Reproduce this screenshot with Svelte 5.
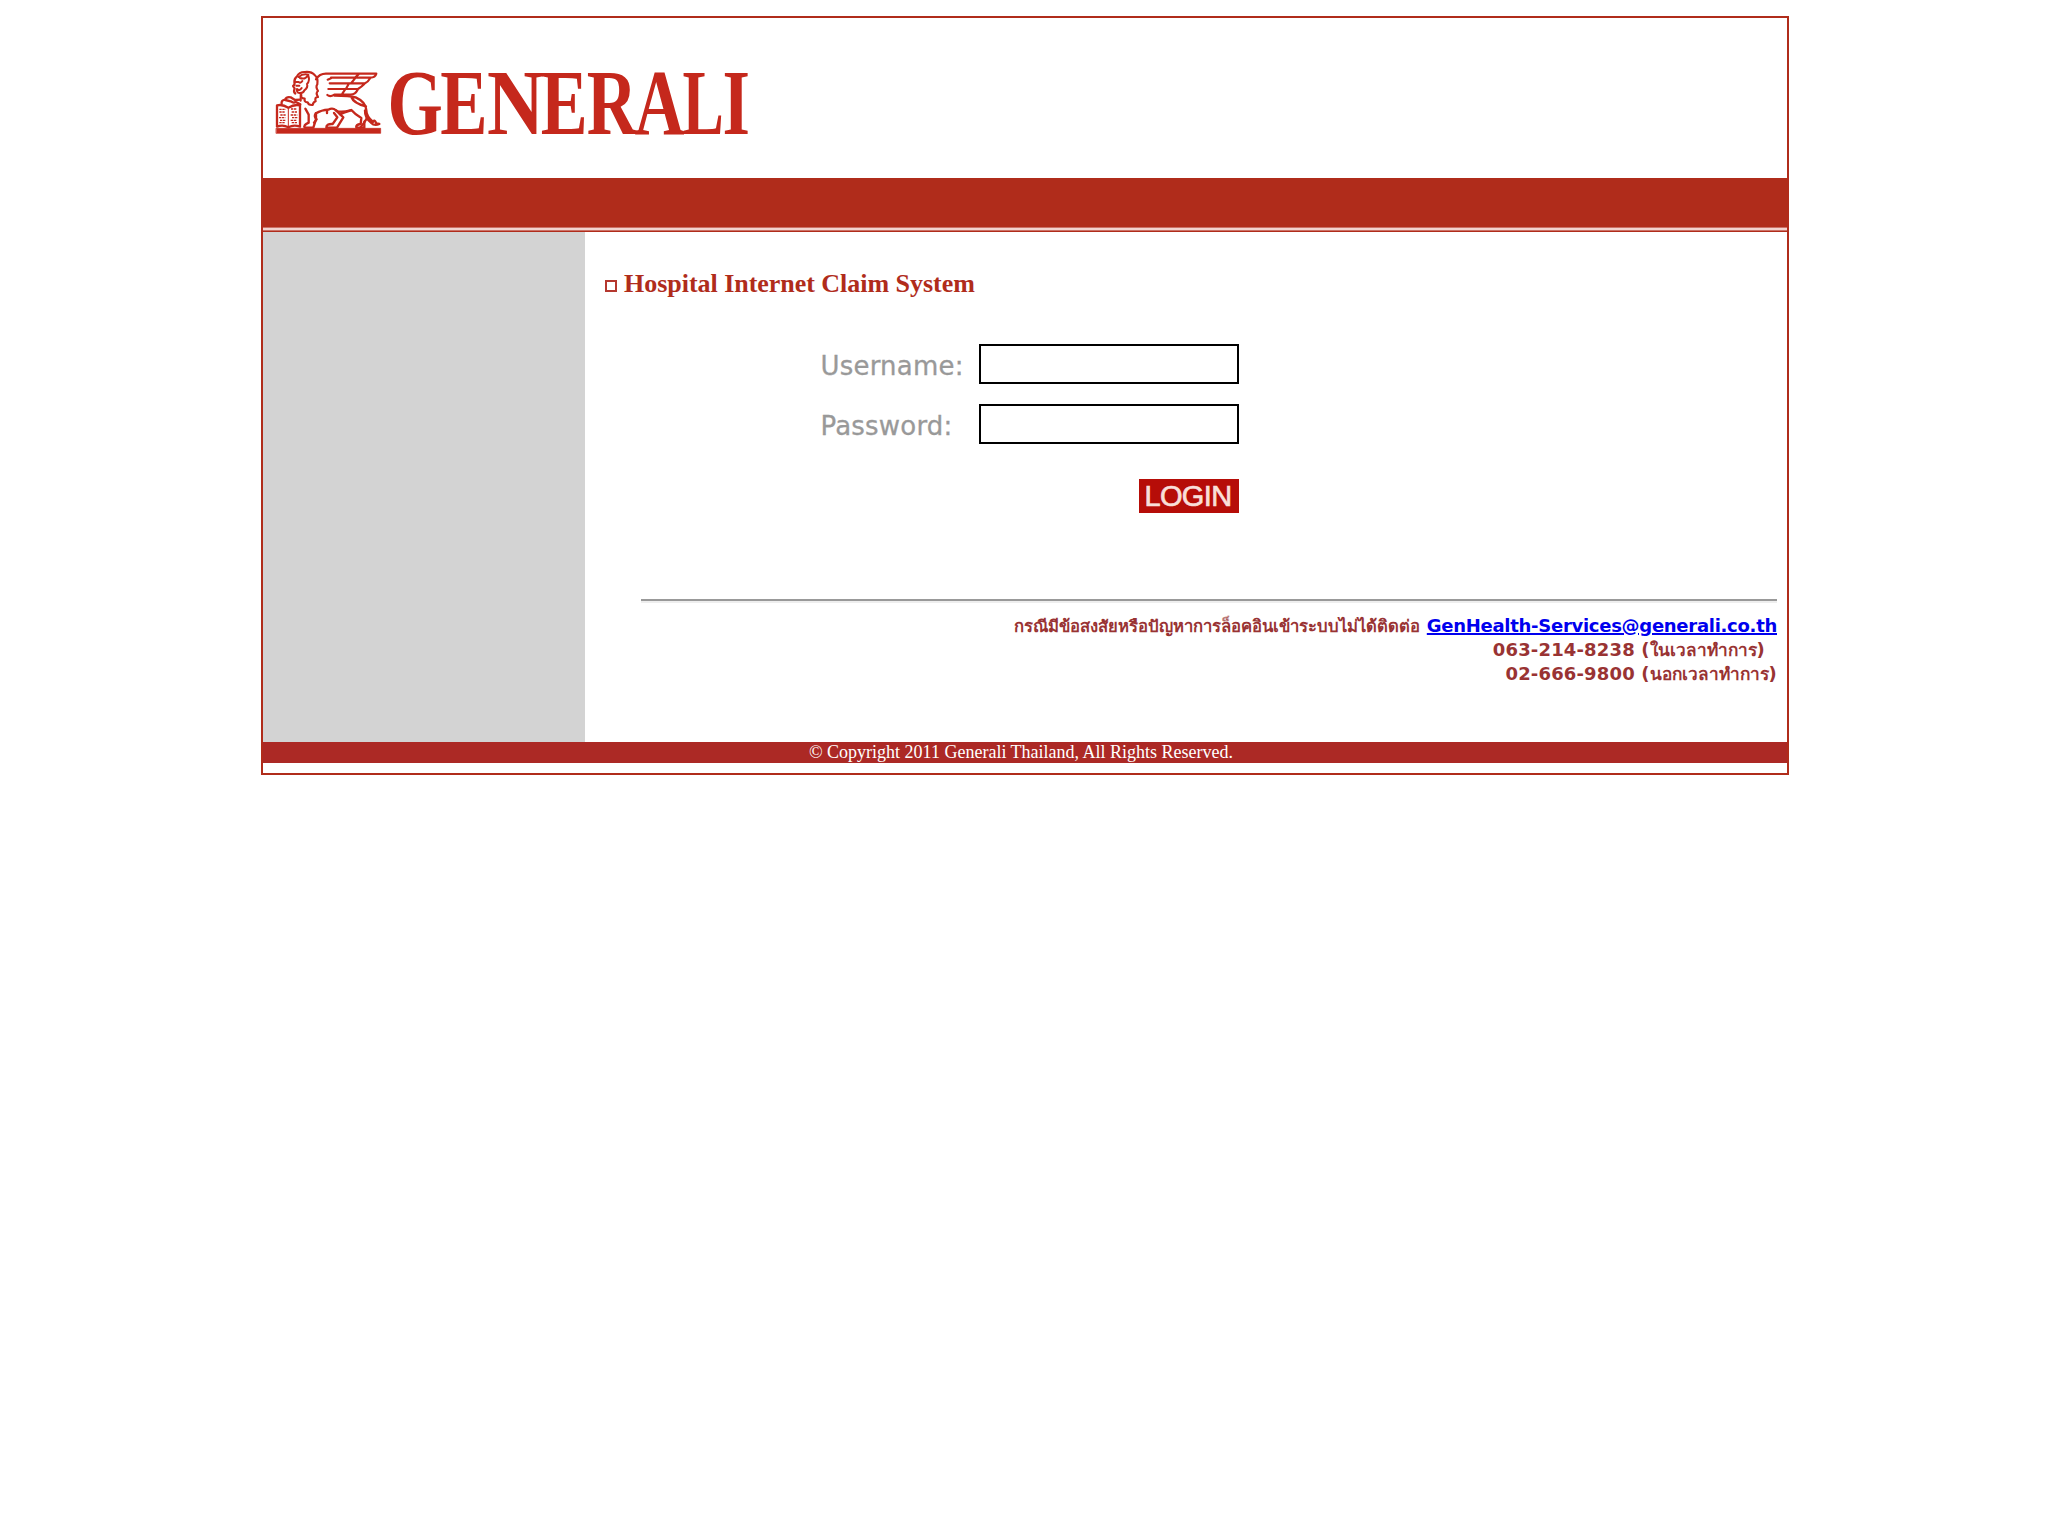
<script>
  let username = $state('');
  let password = $state('');

  // Wordmark letters: left edge and horizontal scale of each condensed capital
  const letters = [
    { ch: 'G', x: 124.6, sx: 0.764 },
    { ch: 'E', x: 177.2, sx: 0.762 },
    { ch: 'N', x: 223.9, sx: 0.85 },
    { ch: 'E', x: 277.8, sx: 0.755 },
    { ch: 'R', x: 323.8, sx: 0.75 },
    { ch: 'A', x: 371.4, sx: 0.745 },
    { ch: 'L', x: 419.6, sx: 0.665 },
    { ch: 'I', x: 459.6, sx: 0.76 }
  ];
</script>

<div class="page">
  <header>
    <svg class="logo" viewBox="0 0 500 160" width="500" height="160" role="img" aria-label="Generali">
      <g transform="translate(2 42) scale(0.33333)" fill="none" stroke="#c5281c" stroke-width="7" stroke-linejoin="round" stroke-linecap="round">
        <path d="M34 205H347V220H34Z" fill="#c5281c" stroke-width="2" />
        <path d="M36 136Q53 132 70 143Q88 132 105 136V200Q86 193 70 202Q54 193 36 200Z" />
        <path d="M70 144V198" stroke-width="3" />
        <path d="M43 148H62M43 156H60M46 165H63M42 173H61M45 181H63M43 188H60M78 147H96M80 156H98M77 165H97M81 173H98M77 181H96M80 188H98" stroke-width="4" stroke-dasharray="7 2" stroke-linecap="butt" />
        <path d="M50 131Q48 121 60 119Q65 109 77 112L90 120L106 119M61 120L77 124Q88 131 91 125L106 133" />
        <path d="M91 101Q84 95 89 86L84 78Q91 74 88 67Q87 56 96 49Q103 35 120 36Q139 34 149 45Q160 54 157 73Q151 80 159 93Q151 99 159 111Q148 111 152 124Q145 126 143 135Q130 136 128 127Q117 127 119 116Q106 115 109 105" stroke-width="6.5" />
        <path d="M101 51Q113 40 130 44Q121 60 105 54M129 44Q136 63 126 72Q130 82 118 91Q115 100 103 99Q94 98 96 87Q104 94 110 84M92 66H101Q107 71 112 63M94 77H103M107 103V122" stroke-width="6" />
        <path d="M153 58Q163 41 183 41H334Q331 52 316 53H198M282 42L270 53M198 55L188 59M316 54Q309 66 300 70H194M270 55L259 69M298 72Q290 80 279 87H190M251 72L243 86M278 89Q271 103 257 104H208Q195 112 187 105M240 89L232 101" stroke-width="6.5" />
        <path d="M209 107Q254 107 272 112Q303 126 304 151Q304 169 324 186Q327 176 334 190L343 192Q328 199 318 188Q299 173 300 151M259 111Q266 130 303 139M303 157Q309 176 298 185V203H274Q271 194 287 192L289 174Q270 163 259 150Q225 160 213 151Q203 142 190 149Q169 150 153 160V178L145 203H120Q113 196 131 188V164L121 146" />
        <path d="M152 160Q146 170 155 178L147 188M186 151V159M213 151L235 172L216 203H184Q183 191 203 192L217 172L207 159M258 151Q237 157 224 163M299 186L286 203" />
      </g>
      <g fill="#c5281c" font-family="'Liberation Serif', serif" font-weight="700" font-size="93">
        {#each letters as l}
          <text transform="translate({l.x} 115.5) scale({l.sx} 1)">{l.ch}</text>
        {/each}
      </g>
    </svg>
  </header>
  <div class="band"></div>
  <div class="stripe"></div>

  <div class="body">
    <aside></aside>
    <main>
      <h1><span class="bullet"></span>Hospital Internet Claim System</h1>
      <form onsubmit={(e) => e.preventDefault()}>
        <label for="user">Username:</label>
        <input id="user" type="text" bind:value={username} />
        <label for="pass">Password:</label>
        <input id="pass" type="password" bind:value={password} />
        <button type="submit">LOGIN</button>
      </form>
      <div class="contact">
        <div class="rule"></div>
        <p><span class="thai">กรณีมีข้อสงสัยหรือปัญหาการล็อคอินเข้าระบบไม่ได้ติดต่อ</span> <a href="mailto:GenHealth-Services@generali.co.th">GenHealth-Services@generali.co.th</a></p>
        <p class="office">063-214-8238 (<span class="thai hours">ในเวลาทำการ</span>)</p>
        <p>02-666-9800 (<span class="thai hours">นอกเวลาทำการ</span>)</p>
      </div>
    </main>
  </div>

  <footer>© Copyright 2011 Generali Thailand, All Rights Reserved.</footer>
</div>

<style>
  :global(body) {
    margin: 0;
    background: #fff;
  }
  .page {
    box-sizing: border-box;
    width: 1528px;
    height: 759px;
    margin: 16px auto 0;
    border: 2px solid #b02c1b;
    font-family: 'Liberation Serif', serif;
  }
  header {
    height: 160px;
  }
  .logo {
    display: block;
  }
  .band {
    height: 49px;
    background: #b02c1b;
  }
  .stripe {
    height: 5px;
    background: linear-gradient(#cc7166 0 1px, #f2d3cf 1px 3px, #cc7166 3px 4px, #b02c1b 4px);
  }
  .body {
    display: flex;
    height: 510px;
  }
  aside {
    width: 322px;
    background: #d3d3d3;
  }
  main {
    flex: 1;
    padding: 37px 10px 0 20px;
  }
  h1 {
    display: flex;
    align-items: center;
    margin: 0;
    height: 30px;
    font-size: 26px;
    line-height: 30px;
    letter-spacing: -0.03px;
    color: #b02c1b;
  }
  .bullet {
    box-sizing: border-box;
    width: 12px;
    height: 12px;
    margin: 4px 7px 0 0;
    border: 2px solid #b5382f;
  }
  form {
    display: grid;
    grid-template-columns: 159px 260px;
    grid-template-rows: 40px 40px 34px;
    row-gap: 20px;
    margin: 45px 0 0 215px;
    font-family: 'DejaVu Sans', sans-serif;
  }
  label {
    padding-left: 0.5px;
    font-size: 26px;
    line-height: 44px;
    letter-spacing: 0.2px;
    color: #999;
    -webkit-text-stroke: 0.3px #999;
  }
  input {
    box-sizing: border-box;
    width: 260px;
    height: 40px;
    border: 2px solid #000;
    border-radius: 0;
    background: #fff;
    outline: none;
    font: 24px 'DejaVu Sans', sans-serif;
  }
  button {
    grid-column: 2;
    justify-self: end;
    width: 100px;
    height: 34px;
    margin-top: 15px;
    padding: 0 2px 0 0;
    border: 0;
    background: #b60d08;
    color: #f9dfd9;
    font: 29px/34px 'Liberation Sans', sans-serif;
    letter-spacing: -0.6px;
    -webkit-text-stroke: 0.7px #f9dfd9;
  }
  .contact {
    margin: 101px 0 0 36px;
    font: 700 18px/24px 'DejaVu Sans', sans-serif;
    letter-spacing: 0.15px;
    text-align: right;
    color: #993333;
  }
  .rule {
    height: 2px;
    margin-bottom: 11px;
    background: #999;
    border-bottom: 2px solid #eee;
  }
  p {
    margin: 0;
    height: 24px;
    white-space: nowrap;
  }
  .thai {
    font-size: 16.65px;
    letter-spacing: 0;
  }
  .hours {
    font-size: 17.2px;
  }
  a {
    color: #00e;
    letter-spacing: -0.28px;
    text-decoration-thickness: 2px;
  }
  .office {
    padding-right: 12px;
  }
  footer {
    height: 21px;
    padding-right: 8px;
    background: #ac2925;
    color: #fff;
    font-size: 18px;
    line-height: 21px;
    text-align: center;
  }
</style>
